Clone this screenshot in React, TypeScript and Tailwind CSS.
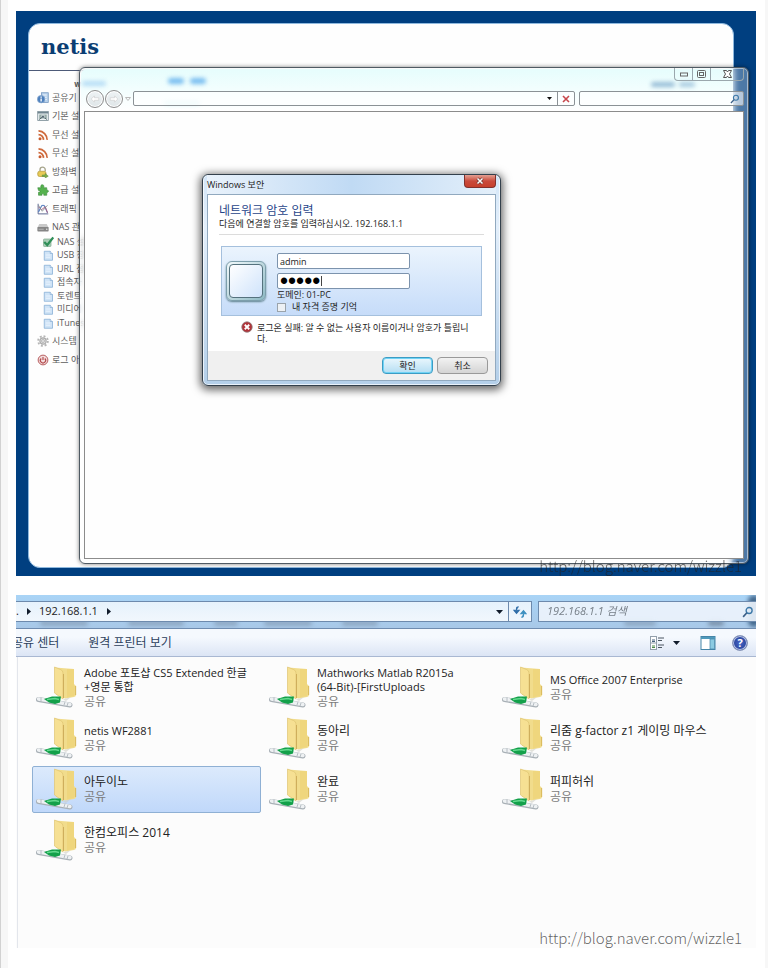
import type { ReactNode } from "react";

const gothic = "font-['Open_Sans','Noto_Sans_CJK_KR',sans-serif]";

function Svg({ size, children, box = "0 0 16 16" }: { size: string; children: ReactNode; box?: string }) {
  return (
    <svg viewBox={box} className={`${size} shrink-0`} aria-hidden="true" fill="none">
      {children}
    </svg>
  );
}

function InfoIcon() {
  return (
    <Svg size="size-3">
      <rect x="6" y="1" width="9" height="13" fill="#b9d2ec" stroke="#6f93bd" />
      <path d="M8 4h5M10 7h3M10 10h3" stroke="#fff" />
      <circle cx="5.5" cy="9.500" r="5" fill="#4c7fbd" stroke="#8aa9cf" />
      <path d="M5.500 6v1.500M5.500 8.500v4" stroke="#fff" strokeWidth="1.800" />
    </Svg>
  );
}

function SetupIcon() {
  return (
    <Svg size="size-3">
      <rect x="1" y="2" width="14" height="12" fill="#eef3f5" stroke="#71858f" />
      <path d="M1 3.500h14" stroke="#71858f" strokeWidth="2" />
      <rect x="3" y="6" width="10" height="6" fill="#94a9a4" />
      <circle cx="8" cy="9" r="2.300" fill="#5c6f77" stroke="#eef3f5" />
      <path d="M3 13l4-4M13 13l-3-3" stroke="#42525b" />
    </Svg>
  );
}

function RssIcon() {
  return (
    <Svg size="size-3">
      <circle cx="4" cy="13" r="2" fill="#c85a2b" />
      <path d="M2 7.500a6.500 6.500 0 0 1 6.500 7M2 2.500a12 12 0 0 1 11.500 12" stroke="#cf6a3c" strokeWidth="2.300" />
    </Svg>
  );
}

function LockIcon() {
  return (
    <Svg size="size-3">
      <path d="M4 7V5a3.500 3.500 0 0 1 7 0v2" stroke="#a8a68e" strokeWidth="1.800" />
      <rect x="1" y="7" width="11" height="7" rx="2.500" fill="#e8ca55" stroke="#b3993c" />
      <path d="M7 12h4v-2l4 3.500-4 2.500v-2H7z" fill="#7fb04a" stroke="#5b8a3a" strokeWidth=".7" />
    </Svg>
  );
}

function PuzzleIcon() {
  return (
    <Svg size="size-3">
      <path
        d="M1 5h4.500C4 2 6 1 7.200 1S10 2.200 8.800 5H13v3.500c3-1.300 3 3.500 0 2.500v4H9c1-2.600-3.200-2.600-2.300 0H2v-4c2.800.7 2.800-3 0-2.400z"
        fill="#55b24e"
        stroke="#3b8a3a"
        strokeWidth=".8"
      />
    </Svg>
  );
}

function TrafficIcon() {
  return (
    <Svg size="size-3">
      <path d="M1.500 1v13.500H15" stroke="#5a6790" strokeWidth="1.300" />
      <path d="M2 12l4-8q2-2 4 0l4 9" stroke="#567fc0" strokeWidth="1.500" />
      <path d="M2 5l4 4 5-4 3 8" stroke="#b0617f" strokeWidth="1.300" />
      <path d="M2 3l5 8 7-8" stroke="#7b8a8a" />
    </Svg>
  );
}

function DriveIcon() {
  return (
    <Svg size="size-3">
      <path d="M3 4h10l2.500 5H.5z" fill="#c9c9c9" />
      <rect x=".5" y="8" width="15" height="6" rx="1" fill="#858585" />
      <path d="M2 11h7" stroke="#c4c4c4" />
      <circle cx="13" cy="11" r="1" fill="#e6e6e6" />
    </Svg>
  );
}

function CheckIcon() {
  return (
    <Svg size="size-3">
      <rect x="2" y="4" width="10" height="10" rx="1" fill="#a9cdb6" stroke="#85ad94" />
      <path d="M3 8l4 4 8-10" stroke="#2f8f58" strokeWidth="3" />
    </Svg>
  );
}

function PageIcon() {
  return (
    <Svg size="size-3">
      <path d="M3 3h8l3 3v9H3z" fill="#cfe3f6" stroke="#83abd4" />
      <path d="M11 3v3h3" fill="#fff" stroke="#83abd4" />
      <path d="M5 8h6M5 11h6" stroke="#e9f4fd" strokeWidth="1.500" />
    </Svg>
  );
}

function GearIcon() {
  return (
    <Svg size="size-3">
      <circle cx="8" cy="8" r="6.500" stroke="#b5b5b5" strokeWidth="2.400" strokeDasharray="2.600 2.500" />
      <circle cx="8" cy="8" r="4.200" fill="#dcdcdc" stroke="#a9a9a9" strokeWidth="1.500" />
      <circle cx="8" cy="8" r="1.800" fill="#fff" stroke="#a0a0a0" />
    </Svg>
  );
}

function LogoutIcon() {
  return (
    <Svg size="size-3">
      <circle cx="8" cy="8" r="6.500" fill="#f3dcdc" stroke="#b5595c" strokeWidth="1.300" />
      <path d="M5.500 6a3.500 3.500 0 1 0 5 0M8 4v4" stroke="#b2484b" strokeWidth="1.500" />
    </Svg>
  );
}

const menu = [
  { label: "공유기", icon: <InfoIcon /> },
  { label: "기본 설", icon: <SetupIcon /> },
  { label: "무선 설", icon: <RssIcon /> },
  { label: "무선 설", icon: <RssIcon /> },
  { label: "방화벽", icon: <LockIcon /> },
  { label: "고급 설", icon: <PuzzleIcon /> },
  { label: "트래픽", icon: <TrafficIcon /> },
  { label: "NAS 관", icon: <DriveIcon /> },
];
const nasMenu = ["NAS 설", "USB 장", "URL 접", "접속자", "토렌트", "미디어", "iTunes"];
const systemMenu = [
  { label: "시스템", icon: <GearIcon /> },
  { label: "로그 아", icon: <LogoutIcon /> },
];

function MenuLink({ label, icon }: { label: string; icon: ReactNode }) {
  return (
    <a href="#menu" className="flex h-4 items-center gap-[3px]">
      {icon}
      {label}
    </a>
  );
}

function RouterPage() {
  return (
    <div className="h-full overflow-hidden rounded-xl border border-[#8fb9de] bg-[#fefefe]">
      <header className="h-[47px] border-b border-[#4d5a78] pt-[9px] pl-3 font-['DejaVu_Serif',serif] text-[21px] leading-7 font-bold text-[#0a3d73]">
        netis
      </header>
      <nav className={`flex w-[52px] flex-col pt-[5px] pl-2 text-[9px] leading-4 whitespace-nowrap text-[#5c5c5c] ${gothic}`}>
        <span className="mb-[-2px] self-end text-[8px] font-bold">w</span>
        <div className="flex h-[145px] flex-col justify-between">
          {menu.map((m, i) => (
            <MenuLink key={i} {...m} />
          ))}
        </div>
        <div className="flex h-[94px] flex-col justify-between pl-[5px]">
          {nasMenu.map((m, i) => (
            <a key={m} href="#nas" className="flex h-[13px] items-center gap-[3px]">
              {i === 0 ? <CheckIcon /> : <PageIcon />}
              {m}
            </a>
          ))}
        </div>
        <div className="flex flex-col gap-[3px] pt-1">
          {systemMenu.map((m) => (
            <MenuLink key={m.label} {...m} />
          ))}
        </div>
      </nav>
    </div>
  );
}

function Ghost({ place }: { place: string }) {
  return <span className={`absolute rounded-full blur-[2px] ${place}`} />;
}

function MagnifierIcon({ size }: { size: string }) {
  return (
    <Svg size={size}>
      <circle cx="9.500" cy="6" r="4" stroke="#3c78a8" strokeWidth="1.800" />
      <path d="M6.500 9l-5 5.500" stroke="#3c6088" strokeWidth="2.200" />
    </Svg>
  );
}

function BrowserWindow() {
  return (
    <section className="absolute top-[56px] right-[7px] bottom-3 left-[63px] flex flex-col rounded-md border border-[#4f5a63] bg-white/30 px-1 pb-1 shadow-[0_0_4px_rgba(0,0,0,0.5),inset_0_0_0_1px_rgba(255,255,255,0.5)] backdrop-blur-[3px]">
      <div className="absolute top-px right-[15px] left-px h-[42px] rounded-tl-md bg-linear-to-b from-[#e6fdfd] to-white" />
      <Ghost place="top-[13px] left-[2px] h-[5px] w-6 bg-[#b5dcf5]" />
      <Ghost place="top-[10px] left-[88px] h-[6px] w-4 bg-[#78bdf0]" />
      <Ghost place="top-[10px] left-[110px] h-[6px] w-4 bg-[#78bdf0]" />
      <Ghost place="top-[33px] left-[84px] h-[4px] w-9 bg-[#d9f6f8]" />
      <Ghost place="top-[14px] right-[73px] h-[5px] w-6 bg-[#96bcd6]" />
      <Ghost place="top-[14px] right-[53px] h-[5px] w-4 bg-[#a9cbe0]" />
      <div className="relative flex h-[13px] justify-end">
        <div className="flex divide-x divide-[#9aa7ad] rounded-b border border-t-0 border-[#9aa7ad]">
          <button aria-label="최소화" className="flex w-[18px] items-center justify-center">
            <Svg size="h-[5px] w-2" box="0 0 8 5"><rect x=".5" y="1" width="7" height="3" stroke="#666" /></Svg>
          </button>
          <button aria-label="최대화" className="flex w-[18px] items-center justify-center">
            <Svg size="h-2 w-[9px]" box="0 0 9 8">
              <rect x=".5" y=".5" width="8" height="7" rx="1" stroke="#666" />
              <rect x="2.500" y="2.500" width="4" height="3" stroke="#666" />
            </Svg>
          </button>
          <button aria-label="닫기" className="flex w-8 items-center justify-center">
            <Svg size="h-2 w-[9px]" box="0 0 9 8">
              <path d="M.5.500h3l1 1.500 1-1.500h3L6.500 4l2 3.500h-3L4.500 6l-1 1.500h-3l2-3.500z" stroke="#555" fill="#fff" />
            </Svg>
          </button>
        </div>
      </div>
      <div className="relative flex h-[30px] items-center pt-[5px] pl-0.5">
        <button aria-label="뒤로" className="flex size-[18px] items-center justify-center rounded-full border border-[#8d8d8d] bg-linear-to-b from-[#eef3f5] to-[#dfe6e8] shadow-[inset_0_0_0_1px_#fff]">
          <Svg size="size-2.5"><path d="M7 3L2 8l5 5v-3h7V6H7z" fill="#fff" stroke="#ccc" /></Svg>
        </button>
        <button aria-label="앞으로" className="ml-px flex size-[18px] items-center justify-center rounded-full border border-[#8d8d8d] bg-linear-to-b from-[#eef3f5] to-[#dfe6e8] shadow-[inset_0_0_0_1px_#fff]">
          <Svg size="size-2.5"><path d="M9 3l5 5-5 5v-3H2V6h7z" fill="#fff" stroke="#ccc" /></Svg>
        </button>
        <Svg size="mx-0.5 h-1 w-[6px]" box="0 0 6 4"><path d="M.5.500h5L3 3.500z" stroke="#bbb" /></Svg>
        <div className="flex h-[15px] flex-1 rounded-xs border border-[#8b9296] bg-white/60">
          <input aria-label="주소" className="min-w-0 flex-1 bg-transparent" />
          <button aria-label="주소 목록" className="flex w-4 items-center justify-center">
            <Svg size="h-[3px] w-[5px]" box="0 0 5 3"><path d="M0 0h5L2.500 3z" fill="#111" /></Svg>
          </button>
          <button aria-label="중지" className="flex w-[17px] items-center justify-center border-l border-[#8b9296]">
            <Svg size="size-2" box="0 0 8 8"><path d="M1 1l6 6M7 1L1 7" stroke="#c8484c" strokeWidth="1.600" /></Svg>
          </button>
        </div>
        <div className="ml-1 flex h-[15px] w-[165px] items-center rounded-xs border border-[#8b9296] bg-white/60 pr-[3px]">
          <input aria-label="검색" className="min-w-0 flex-1 bg-transparent" />
          <MagnifierIcon size="size-2.5" />
        </div>
      </div>
      <div className="relative flex-1 border border-[#8c8c8c] bg-[#fefefe]" />
    </section>
  );
}

function CredentialDialog() {
  return (
    <form className={`absolute top-[163px] left-[186px] w-[299px] rounded-md border border-[#33404c] bg-linear-to-b from-[#d3e6f8] via-[#e3effb] via-25% to-[#b4cfe9] px-1 pb-1 text-[9px] text-[#222] shadow-[0_2px_8px_2px_rgba(0,0,0,0.6),inset_0_0_0_1px_rgba(255,255,255,0.7)] ${gothic}`}>
      <div className="flex h-[19px] justify-between bg-linear-to-r from-[#e9f2fb] via-[#c0daf4] to-[#e3effa]">
        <h2 className="pt-[2px] leading-4">Windows 보안</h2>
        <button type="button" aria-label="닫기" className="flex h-[13px] w-8 items-center justify-center rounded-b-sm border border-t-0 border-[#80302c] bg-linear-to-b from-[#e3a093] via-[#c94a3c] to-[#c63f2b]">
          <Svg size="size-2" box="0 0 8 8">
            <path d="M1.500 1.500l5 5M6.500 1.500l-5 5" stroke="#6d3531" strokeWidth="3" />
            <path d="M1.500 1.500l5 5M6.500 1.500l-5 5" stroke="#fff" strokeWidth="1.500" />
          </Svg>
        </button>
      </div>
      <div className="border border-[#91a9bf] bg-white">
        <div className="px-[11px] pt-2 pb-[7px]">
          <h3 className="text-xs leading-[15px] text-[#1f4589]">네트워크 암호 입력</h3>
          <p className="leading-3">다음에 연결할 암호를 입력하십시오. 192.168.1.1</p>
          <hr className="mt-1 border-[#dcdcdc]" />
          <div className="mx-0.5 mt-[11px] flex h-[70px] border border-[#a5c0dd] bg-linear-to-b from-[#ebf4fd] to-[#c6dcf9] pt-1.5 pl-1">
            <div className="mt-2 size-10 shrink-0 rounded-md border border-[#7d9fac] bg-linear-to-br from-[#f2fafc] to-[#8db9c4] p-0.5 shadow-[0_1px_2px_#5e818d]">
              <div className="size-full rounded-sm border border-[#55727e] bg-linear-to-br from-white to-[#cfe3fb]" />
            </div>
            <div className="ml-[11px] flex flex-col items-start">
              <input aria-label="사용자 이름" defaultValue="admin" className="h-4 w-[133px] rounded-xs border border-[#7c93ad] bg-white px-0.5" />
              <div className="relative mt-1">
                <input
                  type="password"
                  aria-label="암호"
                  defaultValue="12345"
                  className="block h-4 w-[133px] rounded-xs border border-[#7c93ad] bg-white px-0.5 font-['Liberation_Sans',sans-serif] text-[23px] leading-none text-black"
                />
                <span className="absolute top-[3px] left-[44px] h-2.5 w-px bg-[#444]" />
              </div>
              <p className="leading-3">도메인: 01-PC</p>
              <label className="flex items-center gap-[6px] leading-3">
                <input type="checkbox" className="size-[9px] appearance-none border border-[#9aa3ab] bg-[#edf1f5]" />
                내 자격 증명 기억
              </label>
            </div>
          </div>
          <div className="mt-[5px] flex gap-1 pl-[22px] leading-[11px]">
            <Svg size="size-3">
              <circle cx="8" cy="8" r="7" fill="#b0343a" stroke="#8e8080" />
              <path d="M5 5l6 6M11 5l-6 6" stroke="#fff" strokeWidth="2.400" />
            </Svg>
            <p className="pt-px">
              로그온 실패: 알 수 없는 사용자 이름이거나 암호가 틀립니
              <br />
              다.
            </p>
          </div>
        </div>
        <div className="flex h-[29px] items-center justify-end gap-1 bg-[#f0f0f0] pr-[7px]">
          <button className="h-[17px] w-[51px] rounded-sm border border-[#3c9cc4] bg-linear-to-b from-[#eaf7fd] to-[#b5def3] leading-3 shadow-[inset_0_0_0_1px_#6fd3f5]">
            확인
          </button>
          <button type="button" className="h-[17px] w-[51px] rounded-sm border border-[#999] bg-linear-to-b from-[#f2f2f2] to-[#d4d4d4] leading-3">
            취소
          </button>
        </div>
      </div>
    </form>
  );
}

function FolderIcon() {
  return (
    <Svg size="h-[44px] w-[42px]" box="0 0 42 44">
      <path d="M19 1.500l19 1.500V18l2 2v9q0 1.500-2 2l-9 1.500-9-4z" fill="#f1dc8c" />
      <path d="M31 3l7 .3V30l-7 1.300z" fill="#efd67d" />
      <path d="M39.500 20v9" stroke="#dcbd60" strokeWidth="1.300" />
      <path d="M18.500 1l6 2.500q2.500 1 2.500 3.500v26l-8.500-6z" fill="#f6e093" stroke="#e0c472" strokeWidth=".7" />
      <path d="M27.500 8v24" stroke="#cfae5c" strokeWidth="1" />
      <path d="M27 33.500l8-2.500-5 4z" fill="#cfcfc4" opacity=".6" />
      <path d="M2.500 33.500l31.500 5.500" stroke="#a8b0b6" strokeWidth="5" strokeLinecap="round" />
      <path d="M2.500 33l31.500 5.500" stroke="#eef1f3" strokeWidth="3.400" strokeLinecap="round" />
      <path d="M8 33l8-2.500h9l-1 6-5 1.500-6-1.500z" fill="#13a04a" />
      <path d="M11 33.500l8-1 4 1" stroke="#63d98e" strokeWidth="1.300" />
      <path d="M29 36l-1 3M32 37l-1 3M5 31.500v4" stroke="#a7b0b6" strokeWidth=".8" />
    </Svg>
  );
}

const folders: { name: ReactNode; selected?: boolean; latin?: boolean }[] = [
  { name: <>Adobe 포토샵 CS5 Extended 한글<br />+영문 통합</>, latin: true },
  { name: <>Mathworks Matlab R2015a<br />(64-Bit)-[FirstUploads</>, latin: true },
  { name: "MS Office 2007 Enterprise", latin: true },
  { name: "netis WF2881", latin: true },
  { name: "동아리" },
  { name: "리줌 g-factor z1 게이밍 마우스" },
  { name: "아두이노", selected: true },
  { name: "완료" },
  { name: "퍼피허쉬" },
  { name: "한컴오피스 2014" },
];

function Triangle({ down }: { down?: boolean }) {
  return (
    <Svg size="h-[7px] w-[7px]" box="0 0 7 7">
      <path d={down ? "M0 2h7L3.500 6z" : "M2 0v7l4-3.500z"} fill="#111c2b" />
    </Svg>
  );
}

function Explorer() {
  return (
    <section className={`relative flex h-[353px] flex-col overflow-hidden bg-[#fcfcfc] text-xs text-[#222] ${gothic}`}>
      <div className="relative flex h-[34px] items-start gap-1.5 overflow-hidden border-b border-[#6f8cb0] bg-linear-to-b from-[#a9d4f6] to-[#a8c8e8] pt-1.5 text-[11px]">
        <Ghost place="top-[25px] left-[24px] h-1.5 w-12 bg-[#8fa9c4]" />
        <Ghost place="top-[25px] left-[112px] h-1.5 w-14 bg-[#8fa9c4]" />
        <Ghost place="top-[25px] left-[198px] h-1.5 w-6 bg-[#8fa9c4]" />
        <Ghost place="top-[25px] left-[248px] h-1.5 w-12 bg-[#8fa9c4]" />
        <Ghost place="top-[25px] left-[326px] h-1.5 w-9 bg-[#8fa9c4]" />
        <Ghost place="top-[25px] right-[100px] h-1.5 w-8 bg-[#8fa9c4]" />
        <Ghost place="top-[25px] right-[32px] h-1.5 w-4 bg-[#7c93ac]" />
        <Ghost place="top-0 right-[-4px] h-8 w-3 bg-[#44698e]" />
        <div className="relative flex h-[21px] flex-1 items-center border border-l-0 border-[#6d8aad] bg-linear-to-b from-[#e6f2fc] to-[#f1f7fd]">
          <span className="mr-1.5">.</span>
          <Triangle />
          <a href="#host" className="mx-[7px]">192.168.1.1</a>
          <Triangle />
          <button aria-label="이전 위치" className="ml-auto flex h-full w-[18px] items-center justify-center">
            <Triangle down />
          </button>
          <button aria-label="새로 고침" className="flex h-full w-[23px] items-center justify-center border-l border-[#6d8aad]">
            <Svg size="size-3.5">
              <path d="M1 6h6L4 9.500zM4 6V4q0-2 2.500-2" fill="#2f6da8" stroke="#2f6da8" strokeWidth="1.300" />
              <path d="M9 10h6l-3-3.500zM12 10v2q0 2-2.500 2" fill="#3b8fc0" stroke="#3b8fc0" strokeWidth="1.300" />
            </Svg>
          </button>
        </div>
        <div className="relative flex h-[21px] w-[218px] items-center border border-r-0 border-[#6d8aad] bg-[#edf4fc]/90 pr-0.5 pl-2">
          <input aria-label="검색" placeholder="192.168.1.1 검색" className="min-w-0 flex-1 bg-transparent italic outline-none placeholder:text-[#777f88]" />
          <MagnifierIcon size="size-3" />
        </div>
      </div>
      <div className="flex h-[28px] shrink-0 items-center border-b border-[#a9b8d2] bg-linear-to-b from-[#f5f9fe] from-30% to-[#dce5f5] text-[#2c3f5c]">
        <button className="ml-[-4px]">공유 센터</button>
        <button className="ml-[29px]">원격 프린터 보기</button>
        <div className="ml-auto flex items-center pr-2">
          <button aria-label="보기 변경" className="flex items-center gap-2">
            <Svg size="size-4">
              <rect x="1.500" y="1.500" width="6" height="13" fill="#fff" stroke="#93a0ac" />
              <path d="M1.500 8h6" stroke="#93a0ac" />
              <path d="M3 5h3M3 6.500h3" stroke="#46627e" />
              <path d="M3 11h3M3 12.500h3" stroke="#4f8a4a" />
              <path d="M9 3h6M9 5.500h4M9 10h6M9 12.500h4" stroke="#4b5560" />
            </Svg>
            <Triangle down />
          </button>
          <button aria-label="미리 보기 창" className="ml-5">
            <Svg size="size-4">
              <rect x="1" y="1.500" width="14" height="13" fill="#fff" stroke="#4585a8" />
              <path d="M1 3h14" stroke="#4f9abc" strokeWidth="2" />
              <rect x="10" y="4" width="4.500" height="10" fill="#8ccbe2" stroke="#4585a8" strokeWidth=".7" />
            </Svg>
          </button>
          <button aria-label="도움말" className="ml-4 flex size-4 items-center justify-center rounded-full border border-[#8795b8] bg-radial from-[#4666c8] to-[#1f3787] text-[11px] leading-none font-bold text-white shadow-[inset_0_0_0_1px_#b8c4e8]">
            ?
          </button>
        </div>
      </div>
      <ul className="ml-px grid flex-1 grid-cols-[repeat(3,229px)] content-start gap-1 border-l border-[#e3e6ec] pt-[7px] pl-3.5">
        {folders.map((f, i) => (
          <li
            key={i}
            className={
              f.selected
                ? "flex h-[47px] items-center gap-1.5 rounded-xs border border-[#8fb0d4] bg-linear-to-b from-[#dceafc] to-[#c0d8fa] pl-[3px]"
                : "flex h-[47px] items-center gap-1.5 border border-transparent pl-[3px]"
            }
          >
            <FolderIcon />
            <div className="whitespace-nowrap">
              <div className={f.latin ? "text-[11px] leading-[14px]" : "text-xs leading-[14px]"}>{f.name}</div>
              <div className="leading-4 text-[#7b7b7b]">공유</div>
            </div>
          </li>
        ))}
      </ul>
      <Watermark place="bottom-0" />
    </section>
  );
}

function Watermark({ place }: { place: string }) {
  return (
    <span className={`absolute right-3.5 font-['Noto_Sans_CJK_KR',sans-serif] text-[15px] leading-5 font-light text-[#222]/70 ${place}`}>
      http://blog.naver.com/wizzle1
    </span>
  );
}

export default function App() {
  return (
    <div className="min-h-screen border-l border-[#d2d2d2] bg-[#f7f7f7] pr-[3px] pl-[7px]">
      <main className="flex min-h-screen flex-col gap-[19px] bg-white pt-[11px] pr-[9px] pl-2">
        <section className="relative h-[565px] overflow-hidden bg-[#003f80] pt-3 pr-[22px] pb-2 pl-3">
          <RouterPage />
          <BrowserWindow />
          <CredentialDialog />
          <Watermark place="bottom-0" />
        </section>
        <Explorer />
      </main>
    </div>
  );
}
